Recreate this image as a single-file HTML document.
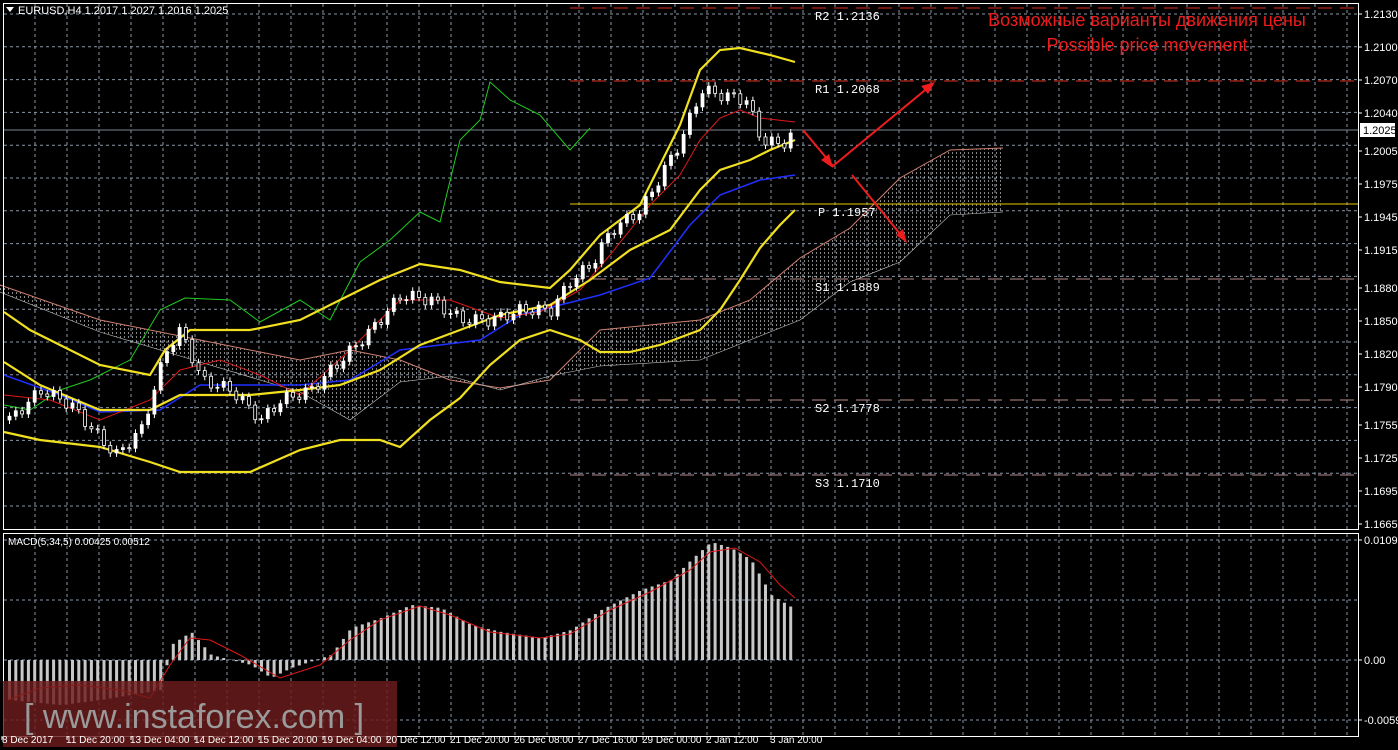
<!DOCTYPE html>
<html><head><meta charset="utf-8"><style>
html,body{margin:0;padding:0;background:#000;width:1398px;height:750px;overflow:hidden}
svg{display:block}
text{font-family:"Liberation Sans",sans-serif;font-size:11px;fill:#fff}
</style></head><body>
<svg id="s" width="1398" height="750" viewBox="0 0 1398 750" xmlns="http://www.w3.org/2000/svg">
<defs>
<pattern id="hatch" width="4" height="4" patternUnits="userSpaceOnUse"><rect x="0" y="0" width="1" height="2" fill="#ddd"/></pattern>
</defs>
<rect width="1398" height="750" fill="#000"/>
<g id="grid" stroke="#8a96a6" stroke-width="1" stroke-dasharray="3,3"></g>
<g id="cloud"></g>
<line x1="570" y1="8" x2="1358" y2="8" stroke="#e0301a" stroke-dasharray="14,8"/>
<line x1="570" y1="81" x2="1358" y2="81" stroke="#e0301a" stroke-dasharray="14,8"/>
<line x1="570" y1="204" x2="1358" y2="204" stroke="#e8c800"/>
<line x1="570" y1="279" x2="1358" y2="279" stroke="#b98c8c" stroke-dasharray="14,8"/>
<line x1="570" y1="400" x2="1358" y2="400" stroke="#b98c8c" stroke-dasharray="14,8"/>
<line x1="570" y1="475" x2="1358" y2="475" stroke="#b98c8c" stroke-dasharray="14,8"/>
<line x1="3" y1="130" x2="1358" y2="130" stroke="#7a8696"/>
<g>
<text x="815" y="20" style="font-size:12px;font-family:'Liberation Mono',monospace">R2 1.2136</text>
<text x="815" y="93" style="font-size:12px;font-family:'Liberation Mono',monospace">R1 1.2068</text>
<text x="818" y="216" style="font-size:12px;font-family:'Liberation Mono',monospace">P 1.1957</text>
<text x="815" y="291" style="font-size:12px;font-family:'Liberation Mono',monospace">S1 1.1889</text>
<text x="815" y="412" style="font-size:12px;font-family:'Liberation Mono',monospace">S2 1.1778</text>
<text x="815" y="487" style="font-size:12px;font-family:'Liberation Mono',monospace">S3 1.1710</text>
</g>
<g id="lines"></g>
<g id="candles"></g>
<g id="macd"></g>
<g stroke="#ee1c1c" stroke-width="2" fill="none">
<polyline points="803,130 833,166 930,86"/>
<polyline points="852,175 905,240"/>
</g>
<g fill="#ee1c1c">
<polygon points="833,168 821,160 829,154"/>
<polygon points="935,82 921,86 928,94"/>
<polygon points="907,243 896,235 903,229"/>
</g>
<text x="1147" y="26" text-anchor="middle" style="font-size:18px;fill:#ee1c1c">Возможные варианты движения цены</text>
<text x="1147" y="51" text-anchor="middle" style="font-size:18px;fill:#ee1c1c">Possible price movement</text>
<rect x="3.5" y="3.5" width="1355" height="526" fill="none" stroke="#fff"/>
<rect x="3.5" y="533.5" width="1355" height="203" fill="none" stroke="#fff"/>
<polygon points="6,7 14,7 10,12" fill="#fff"/>
<text x="18" y="14">EURUSD,H4  1.2017 1.2027 1.2016 1.2025</text>
<text x="8" y="545" style="font-size:10px">MACD(5,34,5) 0.00425 0.00512</text>
<g id="axis"></g>
<rect x="1360" y="123" width="35" height="14" fill="#fff"/>
<text x="1363" y="134" style="fill:#000">1.2025</text>
<rect x="3" y="681" width="394" height="66" fill="rgb(110,28,28)" fill-opacity="0.82"/>
<text x="24" y="728" style="font-size:34px;fill:#9a9a9a">[ www.instaforex.com ]</text>
<g id="time"></g>
</svg>
<script>
var NS="http://www.w3.org/2000/svg";
function el(p,t,a){var e=document.createElementNS(NS,t);for(var k in a)e.setAttribute(k,a[k]);document.getElementById(p).appendChild(e);return e;}
function interp(pts,x){for(var i=0;i<pts.length-1;i++){if(x>=pts[i][0]&&x<=pts[i+1][0]){var t=(x-pts[i][0])/(pts[i+1][0]-pts[i][0]);return pts[i][1]+t*(pts[i+1][1]-pts[i][1]);}}return pts[pts.length-1][1];}
function poly(p,pts,col,w){el(p,"polyline",{points:pts.map(function(a){return a.join(",")}).join(" "),fill:"none",stroke:col,"stroke-width":w||1});}
(function(){
for(var x=35;x<1358;x+=32){el("grid","line",{x1:x,y1:4,x2:x,y2:529});el("grid","line",{x1:x,y1:534,x2:x,y2:736});}
for(var y=14;y<529;y+=32.8){el("grid","line",{x1:4,y1:y,x2:1358,y2:y});}
[540,600,660,720].forEach(function(y){el("grid","line",{x1:4,y1:y,x2:1358,y2:y});});
var cu=[[0,285],[100,320],[200,340],[300,360],[350,350],[400,360],[450,380],[500,388],[550,380],[600,330],[650,325],[700,320],[750,300],[800,258],[850,228],[900,178],[950,150],[1003,148]];
var cl=[[0,292],[100,332],[200,362],[300,392],[350,420],[400,382],[450,376],[500,390],[550,376],[600,366],[700,360],[800,320],[850,282],[900,262],[950,215],[1003,212]];
var d="M"+cu.map(function(a){return a.join(",")}).join(" L")+" L"+cl.slice().reverse().map(function(a){return a.join(",")}).join(" L")+"Z";
el("cloud","path",{d:d,fill:"url(#hatch)",opacity:"0.6"});
poly("cloud",cu,"#d08070",1);poly("cloud",cl,"#c8c8c8",0.6);
var bu=[[4,312],[30,330],[60,345],[100,365],[150,375],[165,350],[190,330],[250,330],[300,320],[340,300],[380,280],[420,264],[460,270],[500,282],[550,288],[570,270],[600,235],[640,205],[680,125],[700,70],[720,50],[740,48],[770,55],[795,62]];
var bm=[[4,362],[40,385],[100,410],[150,410],[180,395],[250,395],[300,390],[340,385],[380,370],[420,345],[460,330],[500,315],[550,305],[590,280],[630,250],[670,230],[700,190],[720,170],[750,160],[770,150],[795,140]];
var bl=[[4,432],[40,440],[100,447],[150,462],[180,472],[250,472],[300,450],[340,440],[380,440],[400,447],[430,420],[460,398],[490,365],[520,340],[550,330],[580,340],[600,352],[630,352],[660,345],[700,330],[720,310],[740,280],[760,248],[780,225],[795,210]];
var ch=[[4,405],[30,410],[60,390],[90,380],[130,360],[160,310],[185,298],[230,300],[260,322],[300,300],[330,320],[360,262],[390,240],[420,212],[440,222],[460,140],[480,120],[490,82],[510,100],[540,115],[570,150],[590,128]];
var kj=[[4,375],[60,395],[100,412],[160,410],[200,385],[300,385],[350,380],[400,350],[480,340],[520,315],[560,305],[600,295],[650,278],[690,225],[720,195],[760,180],[795,175]];
var tk=[[4,395],[50,400],[100,420],[150,400],[180,370],[220,360],[260,375],[300,395],[350,350],[400,300],[450,300],[500,318],[540,312],[580,290],[610,255],[650,205],[680,175],[700,140],[720,118],[740,110],[760,118],[795,122]];
poly("lines",ch,"#1fcc1f",1);poly("lines",kj,"#2030ff",1.5);poly("lines",tk,"#e01818",1);
poly("lines",bu,"#f0e020",2.2);poly("lines",bm,"#f0e020",2.2);poly("lines",bl,"#f0e020",2.2);
var pp=[[8,420],[40,390],[70,405],[100,440],[115,455],[140,430],[165,350],[180,330],[200,380],[230,390],[260,420],[280,400],[310,390],[340,360],[370,330],[400,295],[430,300],[460,320],[490,320],[520,310],[550,310],[570,280],[590,265],[610,230],[640,210],[660,175],[680,140],[700,90],[720,95],[745,100],[760,140],[780,145],[795,130]];
var prev=420;
for(var x=8;x<=795;x+=6.3){var c=interp(pp,x)+Math.sin(x*0.7)*6;var o=prev;prev=c;var tp=Math.min(o,c),bt=Math.max(o,c);if(bt-tp<1)bt=tp+1;
el("candles","line",{x1:x+1.5,y1:tp-4,x2:x+1.5,y2:bt+4,stroke:"#fff"});
el("candles","rect",{x:x,y:tp,width:3,height:bt-tp,fill:(c<o?"#fff":"#000"),stroke:"#fff","stroke-width":0.8});}
var mh=[[8,700],[60,705],[100,700],[160,690],[170,645],[190,632],[210,655],[250,665],[270,678],[290,668],[330,655],[350,628],[380,618],[410,605],[440,608],[470,625],[500,632],[540,638],[570,630],[600,610],[640,590],[670,580],[690,560],[710,542],[730,548],[750,560],[770,595],[795,610]];
var ms=[[8,700],[40,688],[80,685],[120,690],[150,698],[170,665],[190,638],[210,640],[240,655],[280,678],[320,665],[350,640],[380,620],[420,606],[450,615],[490,632],[540,638],[570,634],[610,610],[650,592],[690,570],[710,552],[735,548],[760,562],[780,585],[795,598]];
for(var x=8;x<=795;x+=6.3){var v=interp(mh,x);var a=Math.min(v,660),b=Math.max(v,660);el("macd","rect",{x:x,y:a,width:3,height:b-a,fill:"#c8c8c8"});}
poly("macd",ms,"#e01818",1);
var lv=[["1.2130",14],["1.2100",47],["1.2070",80],["1.2040",113],["1.2005",151],["1.1975",184],["1.1945",217],["1.1915",250],["1.1880",288],["1.1850",321],["1.1820",354],["1.1790",387],["1.1755",425],["1.1725",458],["1.1695",491],["1.1665",524],["0.01096",540],["0.00",660],["-0.00592",720]];
lv.forEach(function(l){el("axis","line",{x1:1358,y1:l[1],x2:1362,y2:l[1],stroke:"#fff"});var t=el("axis","text",{x:1364,y:l[1]+4});t.textContent=l[0];});
var tl=["8 Dec 2017","11 Dec 20:00","13 Dec 04:00","14 Dec 12:00","15 Dec 20:00","19 Dec 04:00","20 Dec 12:00","21 Dec 20:00","26 Dec 08:00","27 Dec 16:00","29 Dec 00:00","2 Jan 12:00","3 Jan 20:00"];
tl.forEach(function(s,i){var x=i==0?2:66+64*(i-1);var t=el("time","text",{x:x,y:743,style:"font-size:10px"});t.textContent=s;el("time","line",{x1:x+(i?1:0),y1:736,x2:x+(i?1:0),y2:740,stroke:"#fff"});});
})();
</script>
</body></html>
